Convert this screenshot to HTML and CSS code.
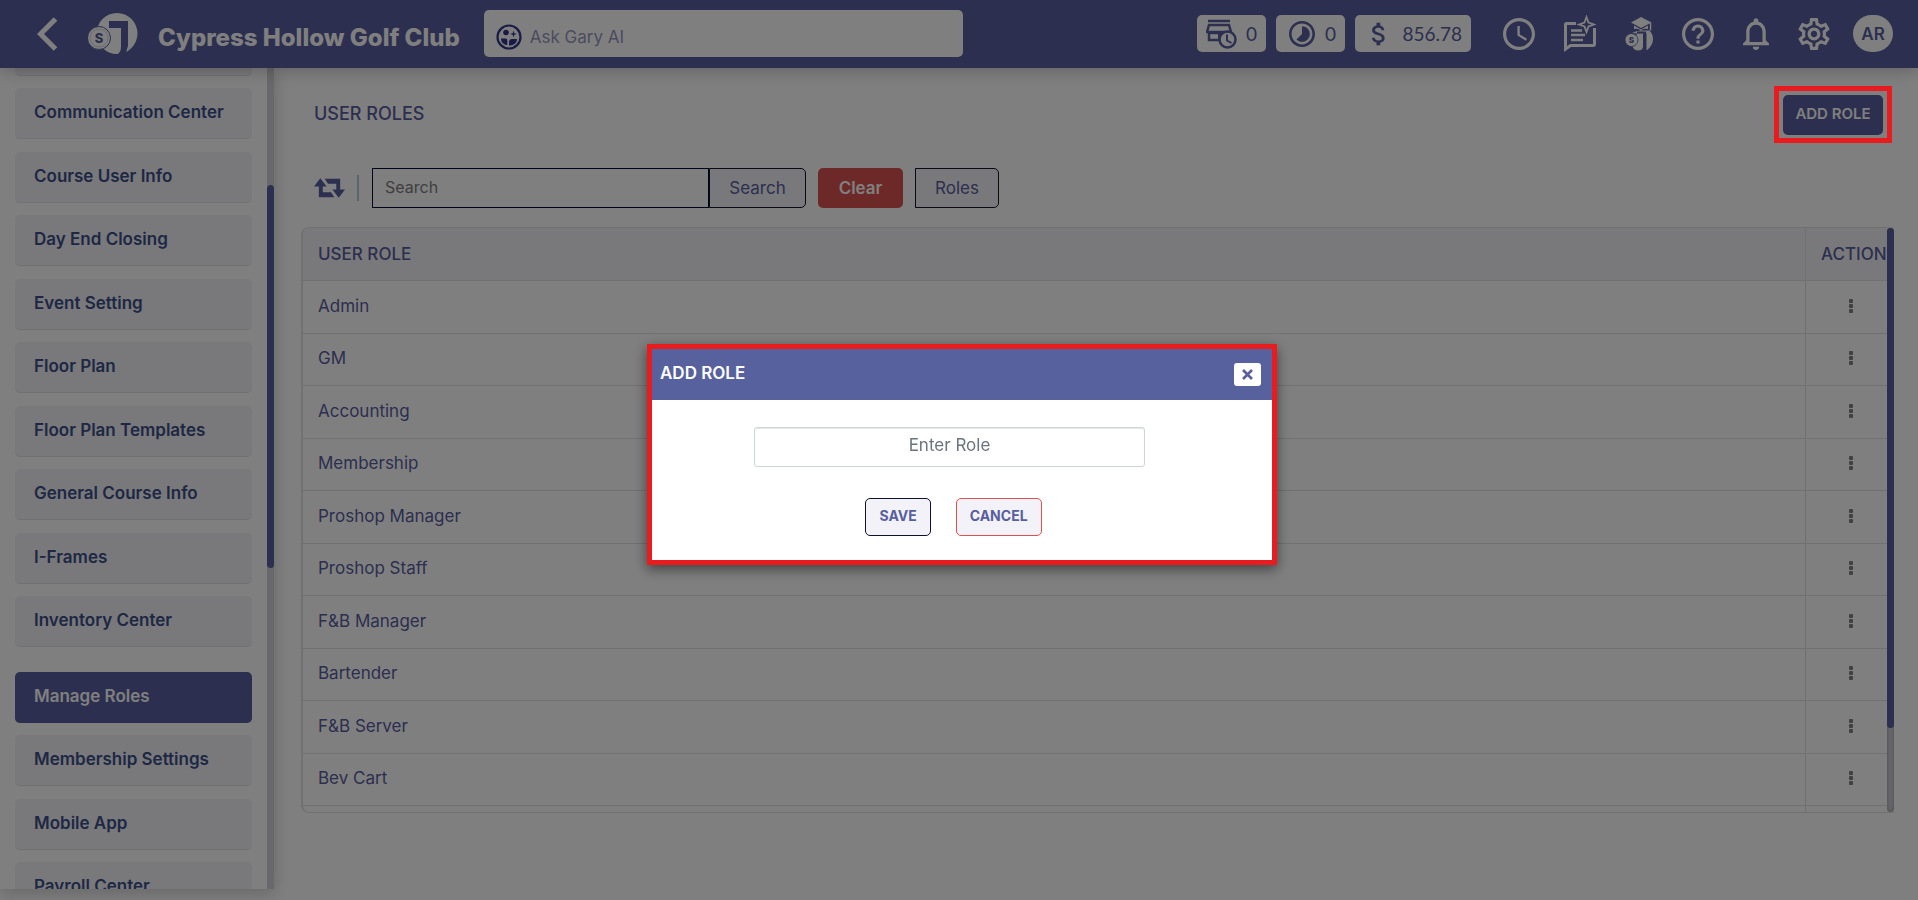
FILE: index.html
```html
<!DOCTYPE html>
<html lang="en">
<head>
<meta charset="utf-8">
<title>User Roles</title>
<link rel="stylesheet" href="styles.css">
</head>
<body>
<header class="topbar">
  <button class="icon-btn back" aria-label="Back"><svg width="21" height="34" viewBox="0 0 21 34"><path d="M18.500 2L3.500 17l15 15" fill="none" stroke="#fff" stroke-width="5"/></svg></button>
  <svg class="logo" width="50" height="42" viewBox="0 0 50 42"><circle cx="29" cy="20.500" r="20.500" fill="#fff"/><path d="M21 8H40V33L37 42H28Q33 40 33 34V15H21zM0 12H8L14 37V42H0z" fill="#585e9e"/><circle cx="11" cy="25" r="11.500" fill="#fff" stroke="#585e9e" stroke-width="1"/><circle cx="11" cy="25" r="9" fill="none" stroke="#d8d9e8" stroke-width="1"/><text x="11" y="30" text-anchor="middle" class="coin">S</text></svg>
  <h1 class="club">Cypress Hollow Golf Club</h1>
  <label class="ask">
    <svg width="26" height="26" viewBox="0 0 26 26"><circle cx="13" cy="13" r="11.500" fill="none" stroke="#34388c" stroke-width="2.200"/><g fill="#34388c"><circle cx="10" cy="8.500" r="2.800"/><path d="M5 14.500h4.500c1.500 0 1.800 1 1.800 2.500v4C8 21 5 18.500 5 14.500zM13 21.500v-3.500c0-2 1-3 3-3h5c0 4-3 6.500-8 6.500zM17.500 6.500l.8 2.700 2.700.8-2.700.8-.8 2.700-.8-2.700-2.700-.8 2.700-.8z"/></g></svg>
    <input type="text" placeholder="Ask Gary AI" aria-label="Ask Gary AI">
  </label>
  <div class="chips">
    <button class="chip"><svg width="31" height="30" viewBox="0 0 31 30" fill="none" stroke="#585e9e"><path d="M2 2h22M3 6h20l2 7H1zM3 13v8h10M3 14h20" stroke-width="2.500"/><path d="M13 14v7" stroke-width="2"/><circle cx="21.500" cy="20.500" r="8" fill="#fff" stroke-width="2.500"/><path d="M21 15.500v6l4.500 2.500" stroke-width="2"/></svg>0</button>
    <button class="chip"><svg class="lapse" width="26" height="26" viewBox="2 2 20 20" fill="#585e9e"><path d="M16.240 7.760C15.070 6.590 13.540 6 12 6v6l-4.240 4.240c2.340 2.340 6.140 2.340 8.490 0 2.340-2.340 2.340-6.140-.01-8.480zM12 2C6.480 2 2 6.480 2 12s4.480 10 10 10 10-4.480 10-10S17.520 2 12 2zm0 18c-4.420 0-8-3.580-8-8s3.580-8 8-8 8 3.580 8 8-3.580 8-8 8z"/></svg>0</button>
    <button class="chip chip-money"><svg width="30" height="30" viewBox="0 0 24 24" fill="#585e9e"><path d="M11.800 10.900c-2.270-.59-3-1.200-3-2.150 0-1.090 1.010-1.850 2.700-1.850 1.780 0 2.440.85 2.500 2.100h2.210c-.07-1.720-1.120-3.300-3.210-3.810V3h-3v2.160c-1.940.42-3.500 1.680-3.500 3.610 0 2.310 1.910 3.460 4.700 4.130 2.500.6 3 1.480 3 2.410 0 .69-.49 1.790-2.700 1.790-2.060 0-2.870-.92-2.980-2.100h-2.200c.12 2.190 1.760 3.420 3.680 3.830V21h3v-2.150c1.950-.37 3.500-1.500 3.500-3.550 0-2.840-2.430-3.810-4.700-4.400z"/></svg>856.78</button>
  </div>
  <nav class="tools" aria-label="Tools">
    <button class="icon-btn" aria-label="Time clock"><svg width="32" height="32" viewBox="2 2 20 20" fill="#fff"><path d="M11.990 2C6.470 2 2 6.480 2 12s4.470 10 9.990 10C17.520 22 22 17.520 22 12S17.520 2 11.990 2zM12 20c-4.420 0-8-3.580-8-8s3.580-8 8-8 8 3.580 8 8-3.580 8-8 8zm.5-13H11v6l5.250 3.150.75-1.230-4.500-2.670z"/></svg></button>
    <button class="icon-btn" aria-label="Messages"><svg width="32" height="38" viewBox="0 0 32 38"><path d="M12 8.500H2.500Q1.500 8.500 1.500 9.500V34l5-3.500H29q1.500 0 1.500-1.500V13" fill="none" stroke="#fff" stroke-width="3"/><path d="M7 15.500h11M7 20h14M7 25h12" stroke="#fff" stroke-width="2.500"/><path d="M22.500 2l2 5.500 5.500 2-5.500 2-2 5.500-2-5.500-5.500-2 5.500-2z" fill="none" stroke="#fff" stroke-width="1.800"/></svg></button>
    <button class="icon-btn" aria-label="Academy"><svg width="28" height="34" viewBox="0 0 28 34"><g fill="#fff"><path d="M7 16q5-3 10-2.500h7.500q3.500 3.500 3.500 9 0 6-6.500 11V16.500H12z"/><path d="M12 16.500h6V29q0 4.500-5 4.500-4 0-5.500-4z"/><path d="M6 5.500L16 0l10.500 5.500L16 11z"/><path d="M9 8.500l7 4 7-4V12q-6-1-7 2-2-3-7-2z"/></g><path d="M25.500 5.500v8" stroke="#fff" stroke-width="1.500"/><path d="M12 15.500h8v17" fill="none" stroke="#585e9e" stroke-width="2"/><circle cx="6.500" cy="23" r="6.500" fill="#fff" stroke="#585e9e" stroke-width=".8"/><text x="6.500" y="26" text-anchor="middle" class="coin-small">S</text></svg></button>
    <button class="icon-btn" aria-label="Help"><svg width="32" height="32" viewBox="2 2 20 20" fill="#fff"><path d="M11 18h2v-2h-2v2zm1-16C6.480 2 2 6.480 2 12s4.480 10 10 10 10-4.480 10-10S17.520 2 12 2zm0 18c-4.410 0-8-3.590-8-8s3.590-8 8-8 8 3.590 8 8-3.590 8-8 8zm0-14c-2.210 0-4 1.790-4 4h2c0-1.100.9-2 2-2s2 .9 2 2c0 2-3 1.750-3 5h2c0-2.250 3-2.500 3-5 0-2.210-1.790-4-4-4z"/></svg></button>
    <button class="icon-btn" aria-label="Notifications"><svg width="26" height="32" viewBox="4 2.300 16 19.700" fill="#fff"><path d="M12 22c1.100 0 2-.9 2-2h-4c0 1.100.9 2 2 2zm6-6v-5c0-3.070-1.630-5.640-4.500-6.320V4c0-.83-.67-1.500-1.500-1.500s-1.500.67-1.500 1.500v.68C7.640 5.360 6 7.920 6 11v5l-2 2v1h16v-1l-2-2zm-2 1H8v-6c0-2.480 1.510-4.500 4-4.500s4 2.020 4 4.500v6z"/></svg></button>
    <button class="icon-btn" aria-label="Settings"><svg width="32" height="32" viewBox="2 2 20 20" fill="#fff"><path d="M19.430 12.980c.04-.32.07-.64.07-.98 0-.34-.03-.66-.07-.98l2.110-1.650c.19-.15.24-.42.12-.64l-2-3.460c-.09-.16-.26-.25-.44-.25-.06 0-.12.010-.17.030l-2.490 1c-.52-.4-1.080-.73-1.690-.98l-.38-2.650C14.460 2.180 14.250 2 14 2h-4c-.25 0-.46.18-.49.42l-.38 2.650c-.61.25-1.170.59-1.690.98l-2.490-1c-.06-.02-.12-.03-.18-.03-.17 0-.34.09-.43.25l-2 3.460c-.13.22-.07.49.12.64l2.110 1.650c-.04.32-.07.65-.07.98 0 .33.03.66.07.98l-2.110 1.650c-.19.15-.24.42-.12.64l2 3.460c.09.16.26.25.44.25.06 0 .12-.01.17-.03l2.490-1c.52.4 1.080.73 1.690.98l.38 2.650c.03.24.24.42.49.42h4c.25 0 .46-.18.49-.42l.38-2.650c.61-.25 1.170-.59 1.690-.98l2.490 1c.06.02.12.03.18.03.17 0 .34-.09.43-.25l2-3.460c.12-.22.07-.49-.12-.64l-2.110-1.650zm-1.980-1.710c.04.31.05.52.05.73 0 .21-.02.43-.05.73l-.14 1.130.89.7 1.080.84-.7 1.210-1.270-.51-1.040-.42-.9.68c-.43.32-.84.56-1.250.73l-1.060.43-.16 1.130-.2 1.350h-1.400l-.19-1.350-.16-1.130-1.060-.43c-.43-.18-.83-.41-1.230-.71l-.91-.7-1.060.43-1.270.51-.7-1.210 1.080-.84.89-.7-.14-1.130c-.03-.31-.05-.54-.05-.74s.02-.43.05-.73l.14-1.130-.89-.7-1.080-.84.7-1.210 1.270.51 1.040.42.9-.68c.43-.32.84-.56 1.250-.73l1.060-.43.16-1.130.2-1.350h1.390l.19 1.350.16 1.130 1.060.43c.43.18.83.41 1.230.71l.91.7 1.060-.43 1.270-.51.7 1.210-1.070.85-.89.7.14 1.130zM12 8c-2.210 0-4 1.790-4 4s1.790 4 4 4 4-1.790 4-4-1.790-4-4-4zm0 6c-1.100 0-2-.9-2-2s.9-2 2-2 2 .9 2 2-.9 2-2 2z"/></svg></button>
    <button class="avatar">AR</button>
  </nav>
</header>

<div class="layout">
  <aside class="sidebar">
    <nav class="menu" aria-label="Settings">
      <span class="item item-cut"></span>
      <a class="item" href="#">Communication Center</a>
      <a class="item" href="#">Course User Info</a>
      <a class="item" href="#">Day End Closing</a>
      <a class="item" href="#">Event Setting</a>
      <a class="item" href="#">Floor Plan</a>
      <a class="item" href="#">Floor Plan Templates</a>
      <a class="item" href="#">General Course Info</a>
      <a class="item" href="#">I-Frames</a>
      <a class="item" href="#">Inventory Center</a>
      <a class="item item-active" href="#">Manage Roles</a>
      <a class="item" href="#">Membership Settings</a>
      <a class="item" href="#">Mobile App</a>
      <a class="item" href="#">Payroll Center</a>
    </nav>
    <div class="track side-track"><div class="thumb"></div></div>
  </aside>

  <main class="main">
    <div class="title-row">
      <h2 class="title">USER ROLES</h2>
      <div class="marked"><button class="add-btn">ADD ROLE</button></div>
    </div>
    <form class="filters">
      <button type="button" class="icon-btn" aria-label="Refresh"><svg width="31" height="20" viewBox="0 0 32 20" fill="#585e9e"><path d="M6.500 0l6.500 8.500H9v6h8.500L21 19.500H5V8.500H0zM11 .5h16v11h5L25.500 20 19 11.500h4v-6h-8.500z"/></svg></button>
      <span class="rule"></span>
      <div class="search-group">
        <input class="search-input" type="text" placeholder="Search" aria-label="Search roles">
        <button type="button" class="btn btn-search">Search</button>
      </div>
      <button type="button" class="btn btn-clear">Clear</button>
      <button type="button" class="btn btn-roles">Roles</button>
    </form>
    <div class="table-box">
      <div class="table-view">
        <table class="roles">
          <thead><tr><th>USER ROLE</th><th class="act">ACTION</th></tr></thead>
          <tbody>
            <tr><td>Admin</td><td class="act"><button class="dots" aria-label="Actions for Admin"><i></i><i></i><i></i></button></td></tr>
            <tr><td>GM</td><td class="act"><button class="dots" aria-label="Actions for GM"><i></i><i></i><i></i></button></td></tr>
            <tr><td>Accounting</td><td class="act"><button class="dots" aria-label="Actions for Accounting"><i></i><i></i><i></i></button></td></tr>
            <tr><td>Membership</td><td class="act"><button class="dots" aria-label="Actions for Membership"><i></i><i></i><i></i></button></td></tr>
            <tr><td>Proshop Manager</td><td class="act"><button class="dots" aria-label="Actions for Proshop Manager"><i></i><i></i><i></i></button></td></tr>
            <tr><td>Proshop Staff</td><td class="act"><button class="dots" aria-label="Actions for Proshop Staff"><i></i><i></i><i></i></button></td></tr>
            <tr><td>F&amp;B Manager</td><td class="act"><button class="dots" aria-label="Actions for F&amp;B Manager"><i></i><i></i><i></i></button></td></tr>
            <tr><td>Bartender</td><td class="act"><button class="dots" aria-label="Actions for Bartender"><i></i><i></i><i></i></button></td></tr>
            <tr><td>F&amp;B Server</td><td class="act"><button class="dots" aria-label="Actions for F&amp;B Server"><i></i><i></i><i></i></button></td></tr>
            <tr><td>Bev Cart</td><td class="act"><button class="dots" aria-label="Actions for Bev Cart"><i></i><i></i><i></i></button></td></tr>
            <tr class="next"><td></td><td class="act"></td></tr>
          </tbody>
        </table>
      </div>
      <div class="track table-track"><div class="thumb"></div></div>
    </div>
  </main>
</div>

<div class="overlay">
  <section class="modal" role="dialog" aria-labelledby="modal-title">
    <div class="modal-head">
      <h2 id="modal-title">ADD ROLE</h2>
      <button class="close" aria-label="Close"><svg width="11" height="11" viewBox="0 0 11 11"><path d="M1 1l9 9M10 1l-9 9" stroke="#585e9e" stroke-width="2.600"/></svg></button>
    </div>
    <form class="modal-body">
      <input class="role-input" type="text" placeholder="Enter Role" aria-label="Enter Role">
      <div class="modal-actions">
        <button type="button" class="small-btn">SAVE</button>
        <button type="button" class="small-btn small-btn-cancel">CANCEL</button>
      </div>
    </form>
  </section>
</div>
</body>
</html>
```

FILE: styles.css
```css
* { box-sizing: border-box; }

body {
  margin: 0;
  height: 100vh;
  display: flex;
  flex-direction: column;
  overflow: hidden;
  background: #fff;
  color: #585e9e;
  font-family: Inter, "Open Sans", sans-serif;
  font-size: 17px;
}

button, input { font: inherit; color: inherit; margin: 0; }
button { cursor: pointer; }
svg { display: block; flex: none; }
h1, h2 { margin: 0; }

.icon-btn { padding: 0; border: 0; background: none; }

/* Top bar */
.topbar {
  position: relative;
  z-index: 2;
  flex: none;
  height: 68px;
  padding: 0 25px 1px 37px;
  display: flex;
  align-items: center;
  background: #585e9e;
  box-shadow: 0 2px 16px rgba(0, 0, 0, .25);
}
.logo { margin-left: 30px; }
.coin { font-size: 13px; font-weight: 800; fill: #585e9e; }
.coin-small { font-size: 8px; font-weight: 800; fill: #585e9e; }
.club {
  margin-left: 20px;
  padding-top: 8px;
  color: #fff;
  font-size: 24px;
  font-weight: 800;
  line-height: 32px;
  white-space: nowrap;
}
.ask {
  width: 25vw;
  height: 47px;
  margin-left: 24px;
  padding: 7px 12px 0;
  display: flex;
  align-items: center;
  gap: 8px;
  border-radius: 5px;
  background: #fff;
}
.ask input {
  flex: 1;
  min-width: 0;
  padding: 0;
  border: 0;
  outline: 0;
  background: none;
}
.ask input::placeholder { color: #9698c0; opacity: 1; }
.chips { margin-left: auto; display: flex; gap: 10px; }
.chip {
  width: 69px;
  height: 37px;
  padding: 0 9px;
  display: flex;
  align-items: center;
  justify-content: space-between;
  border: 0;
  border-radius: 5px;
  background: #fff;
  font-family: Lato, sans-serif;
  font-size: 19px;
}
.lapse { margin-left: 4px; }
.chip-money { width: 116px; }
.tools { margin-left: 32px; display: flex; align-items: center; gap: 29px; }
.avatar {
  width: 40px;
  height: 37px;
  margin-left: -6px;
  padding: 0;
  border: 0;
  border-radius: 19px;
  background: #fff;
  font-size: 17px;
  font-weight: 600;
}

/* Sidebar */
.layout { flex: 1; min-height: 0; display: flex; }
.sidebar {
  flex: none;
  width: 274px;
  margin-bottom: 11px;
  display: flex;
  background: #fff;
  box-shadow: 0 4px 16px rgba(0, 0, 0, .2);
}
.menu { flex: 1; padding: 0 15px; overflow: hidden; }
.item {
  display: block;
  height: 51px;
  margin-bottom: 12px;
  padding: 12px 19px;
  border-bottom: 1px solid #e2e2e8;
  border-radius: 5px;
  background: #f2f2f6;
  color: #3c5088;
  font-weight: 600;
  line-height: 24px;
  text-decoration: none;
  white-space: nowrap;
}
.item:nth-child(even) { margin-bottom: 13px; }
.item-cut { height: 8px; padding: 0; border-radius: 0 0 5px 5px; }
.item-active {
  margin-top: 25px;
  border-color: #585e9e;
  background: #585e9e;
  color: #fff;
}
.track { width: 7px; background: #d2d2d6; }
.side-track { padding-top: 117px; }
.thumb { height: 383px; border-radius: 4px; background: #585e9e; }

/* Main */
.main { flex: 1; min-width: 0; padding: 27px 24px 0 27px; }
.title-row {
  padding: 0 11px 0 13px;
  display: flex;
  justify-content: space-between;
  align-items: center;
}
.title { padding-bottom: 2px; font-size: 18px; font-weight: 500; line-height: 24px; }
.marked { position: relative; }
.marked::after {
  content: "";
  position: absolute;
  inset: -9px -9px -8px;
  z-index: 20;
  border: 5px solid #e81c1e;
}
.add-btn {
  display: block;
  width: 100px;
  height: 40px;
  padding: 0 0 3px;
  border: 0;
  border-radius: 5px;
  background: #585e9e;
  color: #fff;
  font-size: 15px;
  font-weight: 600;
  white-space: nowrap;
}
.filters { margin: 33px 0 19px 13px; display: flex; align-items: center; }
.rule { width: 2px; height: 26px; margin: 0 13px 0 12px; background: #b4c8d8; }
.search-group { display: flex; }
.search-input {
  width: 337px;
  height: 40px;
  padding: 0 12px 2px;
  border: 1px solid #020a30;
  border-radius: 0;
  background: #fff;
  font-size: 16px;
}
.search-input::placeholder { color: #808080; opacity: 1; }
.btn {
  height: 40px;
  padding: 0 0 1px;
  border: 1px solid #10122a;
  border-radius: 0 5px 5px 0;
  background: #f2f2f6;
}
.btn-search { width: 97px; }
.btn-clear {
  width: 85px;
  margin: 0 12px;
  border: 0;
  border-radius: 5px;
  background: #d9534f;
  color: #fff;
  font-weight: 600;
}
.btn-roles { width: 84px; }

/* Roles table */
.table-box {
  display: flex;
  border: 1px solid #e2e2e4;
  border-right: 0;
  border-left-width: 2px;
  border-radius: 8px 0 0 8px;
}
.table-view { flex: 1; min-width: 0; overflow: hidden; border-radius: 6px 0 0 6px; }
.roles { width: 100%; border-collapse: separate; border-spacing: 0; table-layout: fixed; }
.roles th, .roles td {
  height: 52px;
  padding: 0 15px 3px;
  border-bottom: 1px solid #e2e2e4;
  text-align: left;
  white-space: nowrap;
}
.roles th {
  height: 53px;
  padding-bottom: 1px;
  background: #f2f2f6;
  font-weight: 500;
}
.roles tbody tr:nth-child(odd) td { height: 53px; }
.roles .act { width: 82px; padding-right: 0; border-left: 1px solid #e2e2e4; }
.roles .next td, .roles tbody .next:nth-child(odd) td { height: 6px; padding: 0; border-bottom: 0; }
.dots {
  margin-left: 24px;
  padding: 4px;
  display: grid;
  gap: 1px;
  border: 0;
  background: none;
}
.dots i { width: 4px; height: 4px; border-radius: 1px; background: #808484; }
.table-track { border-radius: 4px; box-shadow: inset 0 0 4px rgba(0, 0, 0, .3); }
.table-track .thumb { height: 500px; }

/* Dialog */
.overlay {
  position: fixed;
  inset: 0;
  z-index: 10;
  display: flex;
  justify-content: center;
  align-items: center;
  padding: 9px 0 0 6px;
  background: rgba(0, 0, 0, .5);
}
.modal {
  width: 630px;
  border: 5px solid #e81c1e;
  background: #fff;
  box-shadow: 0 4px 12px rgba(0, 0, 0, .5);
}
.modal-head {
  height: 51px;
  padding: 0 11px 0 8px;
  display: flex;
  justify-content: space-between;
  align-items: center;
  background: #57619d;
  color: #fff;
}
.modal-head h2 { padding-bottom: 3px; font-size: 17px; font-weight: 600; }
.close {
  width: 27px;
  height: 23px;
  padding: 0;
  display: grid;
  place-items: center;
  border: 0;
  border-radius: 3px;
  background: #fff;
}
.modal-body {
  padding: 27px 0 24px;
  display: flex;
  flex-direction: column;
  align-items: center;
  gap: 31px;
}
.role-input {
  width: 391px;
  height: 40px;
  margin-right: 25px;
  padding: 0 12px 4px;
  border: 1px solid #ced4da;
  border-radius: 3px;
  box-shadow: inset 0 1px 1px rgba(0, 0, 0, .1);
  text-align: center;
}
.role-input::placeholder { color: #6c757d; opacity: 1; }
.modal-actions { display: flex; gap: 25px; padding-right: 17px; }
.small-btn {
  height: 38px;
  padding: 0 13px 4px;
  border: 1px solid #10122a;
  border-radius: 5px;
  background: #f2f2f8;
  font-size: 14px;
  font-weight: 700;
}
.small-btn-cancel { border-color: #e05050; }
```
